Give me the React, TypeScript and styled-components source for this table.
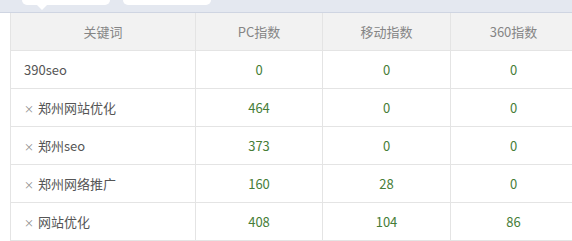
import React from "react";
import styled, { createGlobalStyle } from "styled-components";

const Global = createGlobalStyle`
  html, body { margin: 0; padding: 0; background: #fff; }
  body { font-family: "Noto Sans CJK SC", "Noto Sans", sans-serif; overflow: hidden; }
`;

const Page = styled.div`
  width: 572px;
  height: 241px;
  overflow: hidden;
  background: #fff;
`;

const TabBar = styled.div`
  height: 13px;
  background: #e4e8f0;
  border-bottom: 1px solid #cfd5e2;
  box-sizing: border-box;
  display: flex;
  gap: 13px;
  padding-left: 22px;
  align-items: flex-start;
`;

const Tab = styled.div<{ $active?: boolean }>`
  position: relative;
  width: 88px;
  height: 5px;
  background: #fff;
  border-radius: 0 0 6px 6px;
  ${(p) =>
    p.$active &&
    `
    &::after {
      content: "";
      position: absolute;
      left: 15px;
      top: 5px;
      border-left: 5px solid transparent;
      border-right: 5px solid transparent;
      border-top: 5px solid #fff;
    }
  `}
`;

const TableWrap = styled.div`
  padding-left: 10px;
`;

const Table = styled.table`
  border-collapse: collapse;
  table-layout: fixed;
  width: 566px;
  font-size: 13px;
`;

const Th = styled.th`
  height: 37px;
  background: #f2f2f2;
  color: #858585;
  font-weight: normal;
  text-align: center;
  border: 1px solid #e4e4e4;
  border-top: none;
  padding: 0;
`;

const Td = styled.td<{ $kw?: boolean }>`
  height: 37px;
  border: 1px solid #e4e4e4;
  padding: 0 0 0 ${(p) => (p.$kw ? "13px" : "0")};
  text-align: ${(p) => (p.$kw ? "left" : "center")};
  color: ${(p) => (p.$kw ? "#555" : "#467d37")};
`;

const Cross = styled.span`
  color: #8a8a8a;
  font-size: 10px;
  margin-right: 4px;
`;

const rows = [
  { kw: "390seo", x: false, pc: "0", m: "0", s: "0" },
  { kw: "郑州网站优化", x: true, pc: "464", m: "0", s: "0" },
  { kw: "郑州seo", x: true, pc: "373", m: "0", s: "0" },
  { kw: "郑州网络推广", x: true, pc: "160", m: "28", s: "0" },
  { kw: "网站优化", x: true, pc: "408", m: "104", s: "86" },
];

export default function App() {
  return (
    <Page>
      <Global />
      <TabBar>
        <Tab $active />
        <Tab />
      </TabBar>
      <TableWrap>
        <Table>
          <colgroup>
            <col style={{ width: 185 }} />
            <col style={{ width: 127 }} />
            <col style={{ width: 128 }} />
            <col style={{ width: 126 }} />
          </colgroup>
          <thead>
            <tr>
              <Th>关键词</Th>
              <Th>PC指数</Th>
              <Th>移动指数</Th>
              <Th>360指数</Th>
            </tr>
          </thead>
          <tbody>
            {rows.map((r) => (
              <tr key={r.kw}>
                <Td $kw>
                  {r.x && <Cross>×</Cross>}
                  {r.kw}
                </Td>
                <Td>{r.pc}</Td>
                <Td>{r.m}</Td>
                <Td>{r.s}</Td>
              </tr>
            ))}
          </tbody>
        </Table>
      </TableWrap>
    </Page>
  );
}
